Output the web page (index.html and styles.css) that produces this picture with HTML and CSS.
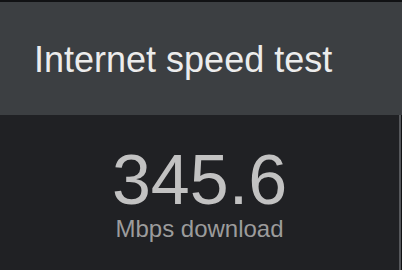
FILE: index.html
```html
<!DOCTYPE html>
<html>
<head>
<meta charset="utf-8">
<link rel="stylesheet" href="styles.css">
</head>
<body>
<div class="app">
  <header class="header">
    <h1 class="title">Internet speed test</h1>
  </header>
  <main class="content">
    <div class="result">
      <div class="value">345.6</div>
      <div class="unit">Mbps download</div>
    </div>
  </main>
</div>
</body>
</html>
```
FILE: styles.css
```css
html, body {
  margin: 0;
  padding: 0;
  width: 402px;
  height: 270px;
  overflow: hidden;
  background: #111214;
  font-family: "Liberation Sans", Arial, sans-serif;
}
.app {
  display: flex;
  flex-direction: column;
  height: 270px;
  padding-top: 2px;
  box-sizing: border-box;
}
.header {
  background: #3c3f42;
  height: 113px;
  padding: 40px 0 0 34px;
  box-sizing: border-box;
}
.title {
  margin: 0;
  font-weight: normal;
  font-size: 36px;
  line-height: 36px;
  color: #ececec;
}
.content {
  flex: 1;
  background: #202124;
  border-right: 2px solid #55575b;
  margin-right: 1px;
  display: flex;
  justify-content: center;
}
.result {
  display: flex;
  flex-direction: column;
  align-items: center;
  padding-top: 29px;
}
.value {
  font-size: 70px;
  line-height: 73px;
  color: #c2c2c2;
}
.unit {
  font-size: 24px;
  line-height: 24px;
  color: #9c9c9c;
}
```
